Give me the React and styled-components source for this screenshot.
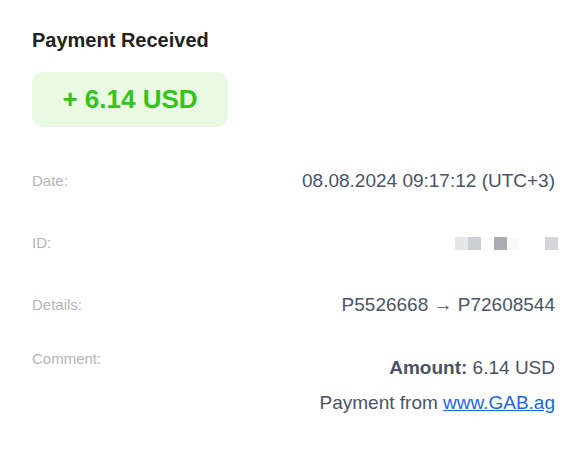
import React from "react";
import styled, { createGlobalStyle } from "styled-components";

const GlobalStyle = createGlobalStyle`
  body {
    margin: 0;
    background: #ffffff;
    font-family: "Liberation Sans", Arial, sans-serif;
  }
`;

// pixelated placeholder for the hidden ID
const idBlocks = [
  { w: 13, c: "#e6e7ea" },
  { w: 13, c: "#ccced3" },
  { w: 13, c: "transparent" },
  { w: 13, c: "#a9adb3" },
  { w: 12, c: "#fafafa" },
  { w: 26, c: "transparent" },
  { w: 13, c: "#d4d5d9" },
];

const App = () => (
  <>
    <GlobalStyle />
    <Card>
      <Title>Payment Received</Title>
      <AmountBadge>+ 6.14 USD</AmountBadge>
      <Rows>
        <Row>
          <Label>Date:</Label>
          <Value>08.08.2024 09:17:12 (UTC+3)</Value>
        </Row>
        <Row>
          <Label>ID:</Label>
          <Masked>
            {idBlocks.map((b, i) => (
              <Block key={i} style={{ width: b.w, background: b.c }} />
            ))}
          </Masked>
        </Row>
        <Row>
          <Label>Details:</Label>
          <Value>P5526668 → P72608544</Value>
        </Row>
        <Row top>
          <Label>Comment:</Label>
          <CommentBox>
            <Value>
              <strong>Amount:</strong> 6.14 USD
            </Value>
            <Value>
              Payment from <Link href="#">www.GAB.ag</Link>
            </Value>
          </CommentBox>
        </Row>
      </Rows>
    </Card>
  </>
);

const Card = styled.div`
  padding: 28px 29px 30px 32px;
  display: flex;
  flex-direction: column;
  align-items: flex-start;
`;

const Title = styled.h2`
  margin: 0;
  font-size: 20px;
  font-weight: 700;
  color: #222222;
  line-height: 24px;
`;

const AmountBadge = styled.div`
  margin-top: 20px;
  width: 196px;
  height: 55px;
  border-radius: 12px;
  background: #e9f9e3;
  color: #31c41b;
  font-size: 26px;
  font-weight: 700;
  display: flex;
  align-items: center;
  justify-content: center;
`;

const Rows = styled.div`
  align-self: stretch;
  margin-top: 23px;
  display: flex;
  flex-direction: column;
`;

const Row = styled.div`
  display: flex;
  justify-content: space-between;
  align-items: ${(p) => (p.top ? "flex-start" : "center")};
  padding: ${(p) => (p.top ? "12px 0 0" : "20px 0")};
`;

const Label = styled.span`
  font-size: 15px;
  color: #b5b5b5;
  line-height: 22px;
`;

const Value = styled.div`
  font-size: 19px;
  color: #4a5366;
  line-height: 22px;
  text-align: right;

  strong {
    font-weight: 700;
  }
`;

const CommentBox = styled.div`
  display: flex;
  flex-direction: column;
  align-items: flex-end;
  gap: 13px;
  padding-top: 9px;
`;

const Link = styled.a`
  color: #1a66e0;
  text-decoration: underline;
`;

const Masked = styled.div`
  display: flex;
  height: 13px;
  margin-right: -3px;
`;

const Block = styled.span`
  display: block;
  height: 13px;
`;

export default App;
